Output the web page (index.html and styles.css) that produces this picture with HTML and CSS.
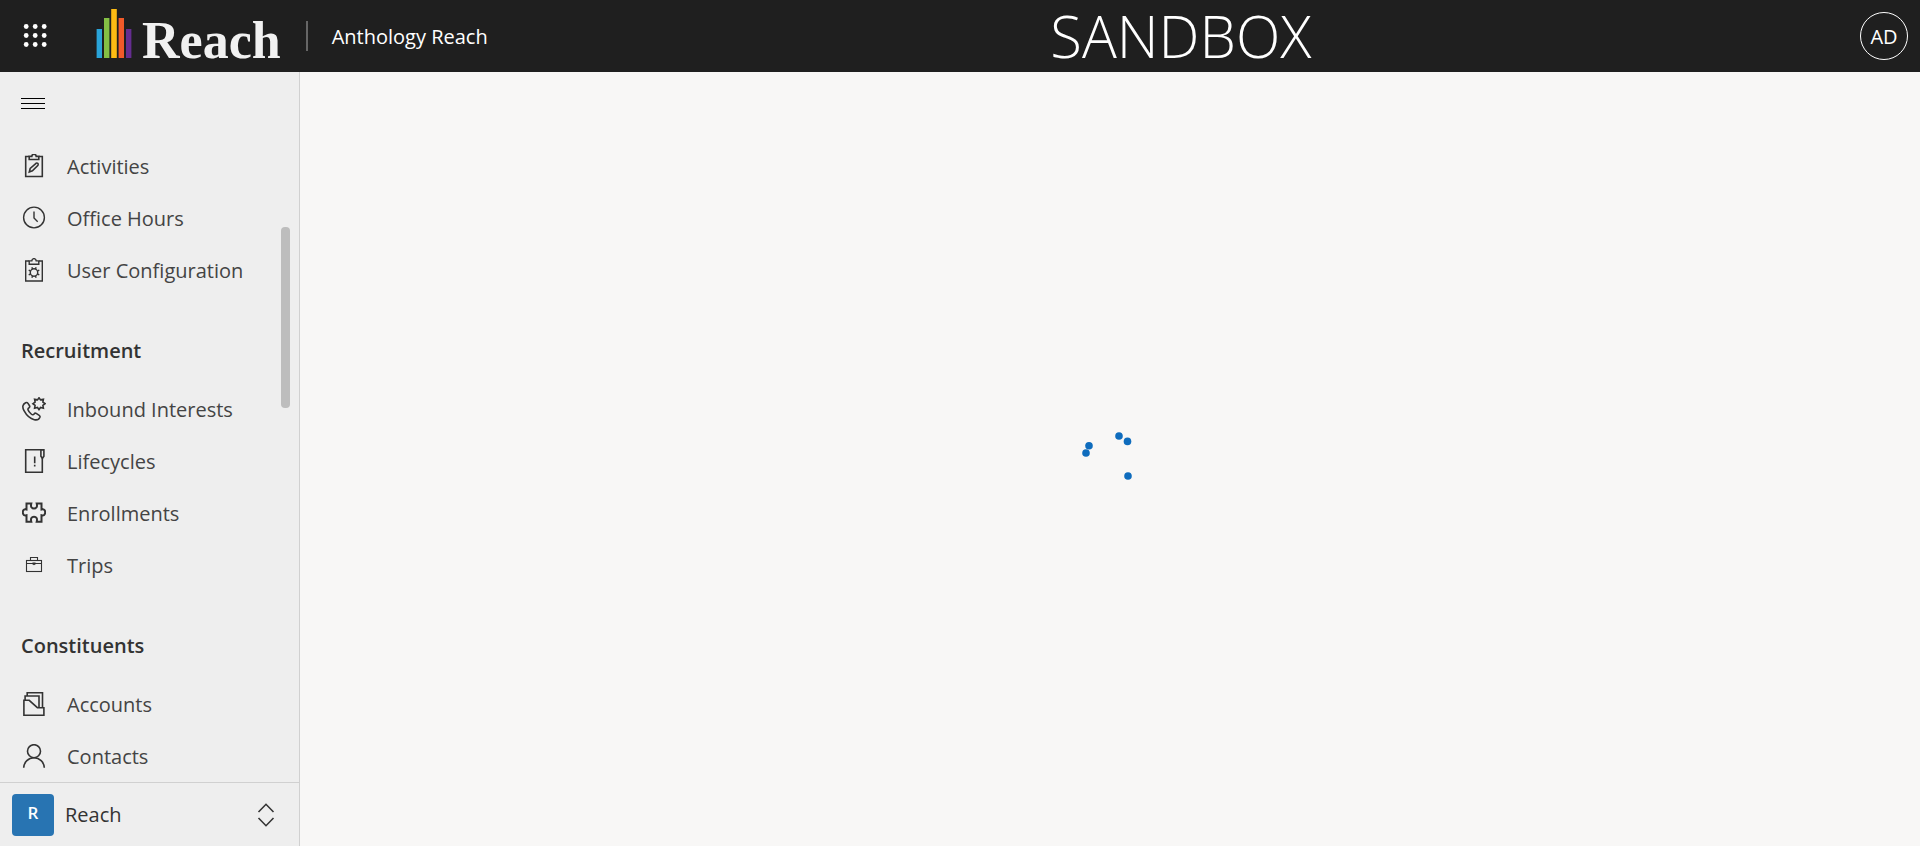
FILE: index.html
```
<!DOCTYPE html>
<html lang="en">
<head>
<meta charset="utf-8">
<title>Anthology Reach</title>
<link rel="stylesheet" href="styles.css">
</head>
<body>
<header class="topbar">
  <button class="launcher" type="button" aria-label="App launcher">
    <svg width="24" height="24" viewBox="0 0 24 24" fill="#fff">
      <circle cx="3.2" cy="2.500" r="2.400"/><circle cx="12.200" cy="2.500" r="2.400"/><circle cx="21.200" cy="2.500" r="2.400"/>
      <circle cx="3.200" cy="11.500" r="2.400"/><circle cx="12.200" cy="11.500" r="2.400"/><circle cx="21.200" cy="11.500" r="2.400"/>
      <circle cx="3.200" cy="20.500" r="2.400"/><circle cx="12.200" cy="20.500" r="2.400"/><circle cx="21.200" cy="20.500" r="2.400"/>
    </svg>
  </button>
  <a class="logo" href="#">
    <svg class="logo-bars" width="36" height="49" viewBox="0 0 36 49">
      <rect x="0.6" y="20" width="5.4" height="29" fill="#29a3d8"/>
      <rect x="8" y="9" width="5.4" height="40" fill="#84c044"/>
      <rect x="15.2" y="0" width="5.6" height="49" fill="#fdbb13"/>
      <rect x="22.6" y="9" width="5.4" height="40" fill="#f15a29"/>
      <rect x="30" y="20" width="5.4" height="29" fill="#652d90"/>
    </svg>
    <span class="logo-word">Reach</span>
  </a>
  <span class="divider"></span>
  <a class="app-name" href="#">Anthology Reach</a>
  <div class="environment">SANDBOX</div>
  <button class="avatar" type="button">AD</button>
</header>
<div class="shell">
  <aside class="sidebar">
    <button class="menu-toggle" type="button" aria-label="Collapse menu">
      <svg width="24" height="12" viewBox="0 0 24 12" fill="#000"><rect width="24" height="1" y="0"/><rect width="24" height="1" y="5"/><rect width="24" height="1" y="10"/></svg>
    </button>
    <nav class="nav">
      <a class="nav-item" href="#">
        <svg class="icon" viewBox="0 0 24 24"><path d="M7 2.500H3.700v20h16.600v-20H17"/><path d="M7.200 5.500V2.400h2.600c.2-3 4.200-3 4.400 0h2.600v3.100z"/><path d="M7.300 18l.9-3.500 5.800-5.200c1.400-.8 2.700.5 2 1.900l-5.600 5.600z"/></svg>
        Activities</a>
      <a class="nav-item" href="#">
        <svg class="icon thin" viewBox="0 0 24 24"><circle cx="12" cy="11.500" r="10.400"/><path d="M12 5.500V12l3.700 3.700"/></svg>
        Office Hours</a>
      <a class="nav-item" href="#">
        <svg class="icon thin" viewBox="0 0 24 24"><path d="M7 3H3.700v20h16.600V3H17"/><path d="M7.200 6.200V2.900h2.600c.2-3 4.200-3 4.400 0h2.600v3.300z"/><circle cx="12" cy="14.500" r="3.700"/><path d="M10.500 11l-.6-1.800M13.500 11l.6-1.800M15.400 13l1.900-.8M15.400 16l1.900.8M13.500 18l.6 1.800M10.500 18l-.6 1.800M8.600 16l-1.900.8M8.600 13l-1.900-.8"/></svg>
        User Configuration</a>
      <h2 class="nav-heading">Recruitment</h2>
      <a class="nav-item" href="#">
        <svg class="icon" viewBox="0 0 24 24"><path d="M3.600 5.700c-3 1.500-3.600 4.300-1.600 8 2.700 5 6 8 10.300 9 2.500.6 4.700-.3 5.600-2.500.3-.8 0-1.400-.7-1.900l-3-1.900c-.8-.5-1.500-.3-2.100.5-.8 1-1.700 1.100-2.900.1-1.500-1.300-2.600-2.700-3.100-4.100-.4-1.100 0-1.700.9-2.200.8-.5 1-1.100.5-2L6 6.400c-.6-.9-1.400-1.200-2.400-.7z"/><path d="M17 .8l1.500 2.100 2.900-.7-.5 2.900 2.200 1.600-2.200 1.600.5 2.900-2.900-.7L17 12.600l-1.500-2.100-2.900.7.5-2.900-2.200-1.600 2.200-1.600-.5-2.900 2.900.7z"/></svg>
        Inbound Interests</a>
      <a class="nav-item" href="#">
        <svg class="icon" viewBox="0 0 24 24"><path d="M22 .8H3.700v22.400h16.600V9"/><path d="M18.900.8h3v6.500l-1.500 2-1.500-2z"/><path d="M12.700 7.500v6.700M12.700 15.700v1.800"/></svg>
        Lifecycles</a>
      <a class="nav-item" href="#">
        <svg class="icon bold" viewBox="0 0 24 24"><path d="M4.500 2.500h4.800c-.9 3.400.3 5 2.700 5s3.600-1.600 2.700-5h4.800v6c2.200-.7 3.700.5 3.700 2.800s-1.500 3.700-3.700 3v6.400h-4.800c.9-3.400-.3-5-2.700-5s-3.600 1.600-2.700 5H4.500v-6.400c-2.200.7-3.700-.7-3.700-3s1.500-3.500 3.700-2.800z"/></svg>
        Enrollments</a>
      <a class="nav-item" href="#">
        <svg class="icon fine" viewBox="0 0 24 24"><rect x="4.500" y="7.500" width="15" height="11"/><path d="M8.500 7.500v-3h7v3M4.500 10.500h6l1.500 1 1.500-1h6M11 10h2v1h-2z"/></svg>
        Trips</a>
      <h2 class="nav-heading">Constituents</h2>
      <a class="nav-item" href="#">
        <svg class="icon" viewBox="0 0 24 24"><path d="M1.900 8.300h5.300l8.200 7.400h6.500v7.500h-20z"/><path d="M3.100 8V4H17v11.500M5.200 3.800V.8h15.300v14.700"/></svg>
        Accounts</a>
      <a class="nav-item" href="#">
        <svg class="icon" viewBox="0 0 24 24"><circle cx="12" cy="7.200" r="6.500"/><path d="M1.700 23.800c.4-6 4.600-10 10.300-10s9.900 4 10.300 10"/></svg>
        Contacts</a>
      <span class="scroll-thumb"></span>
    </nav>
    <button class="area-switcher" type="button">
      <span class="area-badge">R</span>
      <span class="area-name">Reach</span>
      <svg class="area-arrows" width="20" height="24" viewBox="0 0 20 24"><path d="M2.500 9L10 1.300 17.500 9M2.500 15l7.500 7.700 7.500-7.700"/></svg>
    </button>
  </aside>
  <main class="content">
    <svg width="60" height="60" viewBox="-30 -30 60 60" fill="#0f6cbd" role="img" aria-label="Loading">
      <circle cx="9" cy="-23" r="3.800"/><circle cx="17.500" cy="-17.600" r="3.800"/><circle cx="18" cy="17" r="3.800"/><circle cx="-21" cy="-13.300" r="3.800"/><circle cx="-24" cy="-6" r="3.800"/>
    </svg>
  </main>
</div>
</body>
</html>
```
FILE: styles.css
```
* { box-sizing: border-box; }
body {
  margin: 0;
  height: 100vh;
  display: flex;
  flex-direction: column;
  font-family: "Segoe UI", "Open Sans", "Noto Sans", sans-serif;
  font-size: 20px;
  color: #333;
}
a { color: inherit; text-decoration: none; }
button {
  border: 0;
  padding: 0;
  background: none;
  font: inherit;
  color: inherit;
  cursor: pointer;
}
svg { display: block; flex: none; }

.topbar {
  display: flex;
  align-items: center;
  height: 72px;
  flex: none;
  padding: 0 12px 0 23px;
  background: #1f1f1f;
  color: #fff;
}
.logo {
  display: flex;
  align-items: baseline;
  gap: 10px;
  margin-left: 49px;
  padding-top: 8px;
}
.logo-word {
  font: bold 52px/60px "Liberation Serif", serif;
  color: #f1f1f1;
}
.divider {
  width: 2px;
  height: 30px;
  margin: 0 24px 0 25px;
  background: #666;
}
.environment {
  flex: 1;
  padding-left: 14px;
  text-align: center;
  font-size: 58px;
  font-weight: 300;
  line-height: 72px;
}
.avatar {
  width: 48px;
  height: 48px;
  border: 1px solid #fff;
  border-radius: 50%;
}

.shell {
  flex: 1;
  min-height: 0;
  display: flex;
}
.sidebar {
  width: 300px;
  flex: none;
  display: flex;
  flex-direction: column;
  background: #eee;
  border-right: 1px solid #d0d0d0;
}
.menu-toggle {
  flex: none;
  align-self: flex-start;
  padding: 26px 21px 30px;
}
.nav {
  position: relative;
  flex: 1;
  min-height: 0;
  overflow: hidden;
  color: #444;
}
.nav-item {
  display: flex;
  align-items: center;
  gap: 21px;
  height: 52px;
  padding-left: 22px;
}
.nav-heading {
  margin: 0;
  padding: 43px 21px 20px;
  font-size: 20px;
  font-weight: 600;
  line-height: 24px;
  color: #333;
}
.icon {
  width: 24px;
  height: 24px;
  fill: none;
  stroke: #333;
  stroke-width: 1.6;
}
.icon.thin { stroke-width: 1.4; }
.icon.fine { stroke-width: 1.1; }
.icon.bold { stroke-width: 2; }
.scroll-thumb {
  position: absolute;
  top: 87px;
  right: 9px;
  width: 9px;
  height: 181px;
  border-radius: 4px;
  background: #bdbdbd;
}
.area-switcher {
  display: flex;
  align-items: center;
  flex: none;
  height: 64px;
  padding: 0 23px 0 12px;
  border-top: 1px solid #d0d0d0;
  text-align: left;
}
.area-badge {
  width: 42px;
  height: 42px;
  border-radius: 4px;
  background: #2874b2;
  color: #fff;
  font-size: 17px;
  font-weight: 600;
  line-height: 38px;
  text-align: center;
}
.area-name {
  flex: 1;
  padding-left: 11px;
  font-weight: 500;
}
.area-arrows {
  fill: none;
  stroke: #333;
  stroke-width: 1.6;
}
.content {
  flex: 1;
  display: flex;
  align-items: center;
  justify-content: center;
  background: #f8f7f6;
}
```
